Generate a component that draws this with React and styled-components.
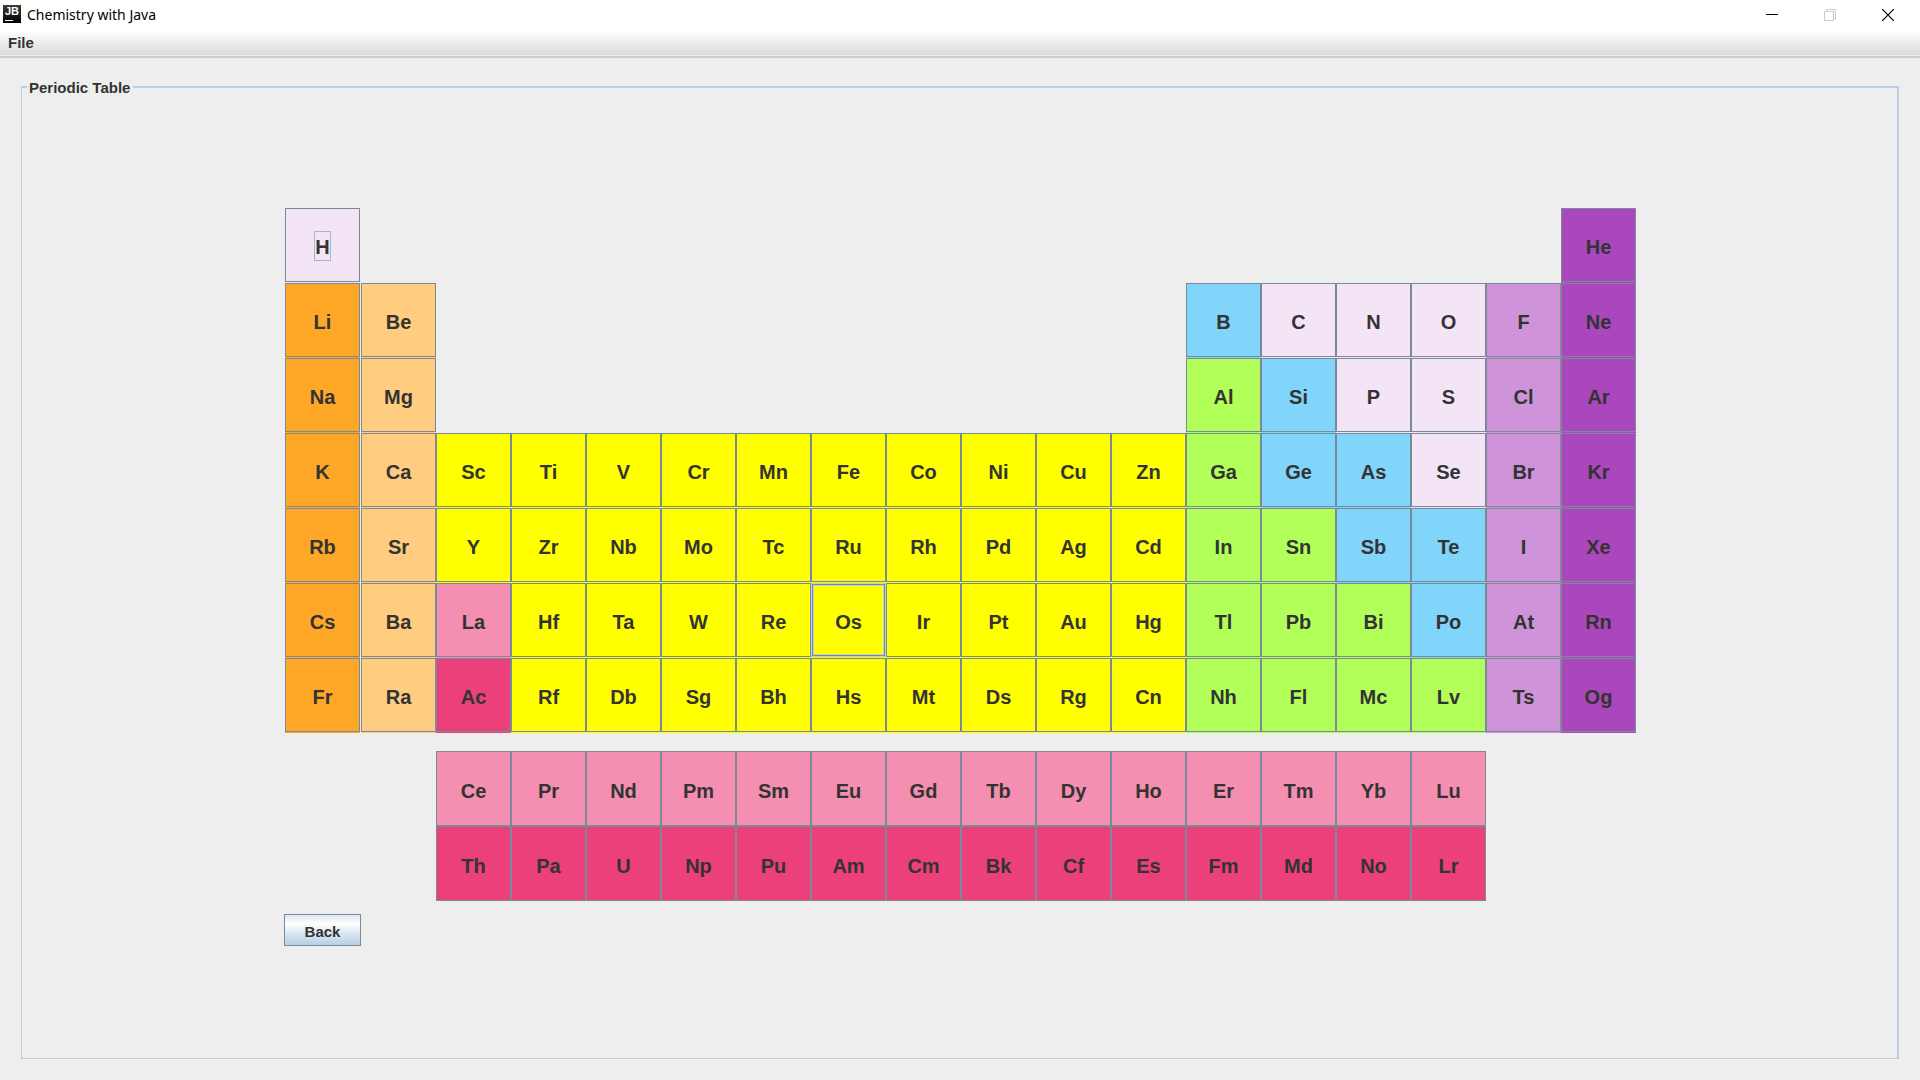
import React from "react";
import styled, { createGlobalStyle } from "styled-components";

const GlobalStyle = createGlobalStyle`
  * { box-sizing: border-box; }
  body { margin: 0; background: #eeeeee; }
  button { font: inherit; color: inherit; margin: 0; padding: 0; }
`;

const Window = styled.div`
  display: flex;
  flex-direction: column;
  min-height: 100vh;
  background: #eeeeee;
  color: #333333;
  font: bold 15px/18px "Liberation Sans", Arial, sans-serif;
`;

const TitleBar = styled.header`
  display: flex;
  align-items: center;
  height: 30px;
  padding: 0 3px;
  background: #ffffff;
`;

const AppIcon = styled.span`
  display: flex;
  flex-direction: column;
  width: 18px;
  height: 18px;
  margin-bottom: 2px;
  padding: 1px 2px;
  background: linear-gradient(#3c3c3c, #000000);
  color: #ffffff;
  font-size: 11px;
  line-height: 11px;
  &::after {
    content: "";
    width: 8px;
    height: 1px;
    margin-top: 3px;
    background: #ffffff;
  }
`;

const Title = styled.h1`
  flex: 1;
  margin: 0 0 0 6px;
  color: #000000;
  font: 14px/20px "Noto Sans", "Segoe UI", sans-serif;
`;

const WindowButton = styled.button`
  display: flex;
  align-items: center;
  justify-content: center;
  width: 58px;
  height: 28px;
  border: 0;
  background: transparent;
  color: ${(p) => (p.disabled ? "#cccccc" : "#000000")};
`;

const MenuBar = styled.nav`
  display: flex;
  align-items: center;
  height: 28px;
  padding-left: 8px;
  padding-bottom: 1px;
  border-bottom: 2px solid #cccccc;
  background: linear-gradient(#ffffff, #dadada 25px, #eeeeee 25px);
`;

const MenuButton = styled.button`
  border: 0;
  background: transparent;
`;

const Main = styled.main`
  flex: 1;
  display: flex;
  padding: 19px 21px 21px;
`;

const Panel = styled.fieldset`
  flex: 1;
  display: flex;
  align-items: center;
  justify-content: center;
  min-width: 0;
  margin: 0;
  padding: 0 3px 2px 5px;
  border: solid #b8cfe5;
  border-width: 2px 2px 1px 1px;
`;

const PanelTitle = styled.legend`
  padding: 2px 3px 0 2px;
`;

const Content = styled.div`
  display: flex;
  flex-direction: column;
  align-items: flex-start;
`;

const Table = styled.div`
  display: grid;
  grid-template-columns: 76px repeat(17, 75px);
  grid-template-rows: repeat(7, 75px) 18px repeat(2, 75px);
  margin: 0 1px 13px;
`;

const fills = {
  nonmetal: "#f3e5f5",
  alkali: "#ffa726",
  alkaline: "#ffcc80",
  transition: "#ffff00",
  metal: "#b2ff59",
  metalloid: "#81d4fa",
  halogen: "#ce93d8",
  noble: "#ab47bc",
  lanthanide: "#f48fb1",
  actinide: "#ec407a",
};

const Element = styled.button`
  grid-column: ${(p) => p.$column};
  grid-row: ${(p) => p.$row};
  display: flex;
  width: 75px;
  height: 75px;
  border: 0;
  background: ${(p) => fills[p.$kind]};
  font-size: 20px;
  line-height: 26px;
`;

const Face = styled.span`
  flex: 1;
  align-self: stretch;
  display: flex;
  align-items: center;
  justify-content: center;
  margin-bottom: ${(p) => (p.$series ? 0 : 1)}px;
  padding-top: ${(p) => (p.$series ? 3 : 2)}px;
  border: 1px solid #7a8a99;
  ${(p) =>
    p.$hovered &&
    `
    border-color: #b8cfe5;
    box-shadow: inset 0 0 0 1px #7a8a99, inset 0 0 0 2px #b8cfe5;
  `}
`;

const Symbol = styled.span`
  padding-top: 2px;
  outline: ${(p) => (p.$focused ? "1px solid #a3b8cc" : "none")};
`;

const BackButton = styled.button`
  width: 77px;
  height: 32px;
  padding-top: 4px;
  border: 1px solid #7a8a99;
  background: linear-gradient(#dde8f3, #ffffff 30%, #dde8f3 60%, #b8cfe5);
`;

const n = "nonmetal", a = "alkali", e = "alkaline", t = "transition", m = "metal",
  d = "metalloid", h = "halogen", g = "noble", l = "lanthanide", c = "actinide";

const runs = [
  [1, 1, [["H", n]]],
  [1, 18, [["He", g]]],
  [2, 1, [["Li", a], ["Be", e]]],
  [2, 13, [["B", d], ["C", n], ["N", n], ["O", n], ["F", h], ["Ne", g]]],
  [3, 1, [["Na", a], ["Mg", e]]],
  [3, 13, [["Al", m], ["Si", d], ["P", n], ["S", n], ["Cl", h], ["Ar", g]]],
  [4, 1, [["K", a], ["Ca", e], ["Sc", t], ["Ti", t], ["V", t], ["Cr", t], ["Mn", t], ["Fe", t], ["Co", t], ["Ni", t], ["Cu", t], ["Zn", t], ["Ga", m], ["Ge", d], ["As", d], ["Se", n], ["Br", h], ["Kr", g]]],
  [5, 1, [["Rb", a], ["Sr", e], ["Y", t], ["Zr", t], ["Nb", t], ["Mo", t], ["Tc", t], ["Ru", t], ["Rh", t], ["Pd", t], ["Ag", t], ["Cd", t], ["In", m], ["Sn", m], ["Sb", d], ["Te", d], ["I", h], ["Xe", g]]],
  [6, 1, [["Cs", a], ["Ba", e], ["La", l], ["Hf", t], ["Ta", t], ["W", t], ["Re", t], ["Os", t], ["Ir", t], ["Pt", t], ["Au", t], ["Hg", t], ["Tl", m], ["Pb", m], ["Bi", m], ["Po", d], ["At", h], ["Rn", g]]],
  [7, 1, [["Fr", a], ["Ra", e], ["Ac", c], ["Rf", t], ["Db", t], ["Sg", t], ["Bh", t], ["Hs", t], ["Mt", t], ["Ds", t], ["Rg", t], ["Cn", t], ["Nh", m], ["Fl", m], ["Mc", m], ["Lv", m], ["Ts", h], ["Og", g]]],
  [9, 3, ["Ce", "Pr", "Nd", "Pm", "Sm", "Eu", "Gd", "Tb", "Dy", "Ho", "Er", "Tm", "Yb", "Lu"].map((s) => [s, l])],
  [10, 3, ["Th", "Pa", "U", "Np", "Pu", "Am", "Cm", "Bk", "Cf", "Es", "Fm", "Md", "No", "Lr"].map((s) => [s, c])],
];

export default function App() {
  return (
    <Window>
      <GlobalStyle />
      <TitleBar>
        <AppIcon>JB</AppIcon>
        <Title>Chemistry with Java</Title>
        <WindowButton aria-label="Minimize">
          <svg width="12" height="12" shapeRendering="crispEdges"><path d="M0 5.5h12" stroke="currentColor" /></svg>
        </WindowButton>
        <WindowButton aria-label="Restore" disabled>
          <svg width="12" height="12" fill="none" stroke="currentColor" shapeRendering="crispEdges">
            <path d="M.5 2.5h9v9h-9zM2.5 2.5v-2h9v9h-2" />
          </svg>
        </WindowButton>
        <WindowButton aria-label="Close">
          <svg width="12" height="12"><path d="M0 0l12 12M12 0L0 12" stroke="currentColor" strokeWidth="1.2" /></svg>
        </WindowButton>
      </TitleBar>
      <MenuBar>
        <MenuButton>File</MenuButton>
      </MenuBar>
      <Main>
        <Panel>
          <PanelTitle>Periodic Table</PanelTitle>
          <Content>
            <Table>
              {runs.map(([row, start, items]) =>
                items.map(([symbol, kind], i) => (
                  <Element key={symbol} $row={row} $column={start + i} $kind={kind}>
                    <Face $series={row > 7} $hovered={symbol === "Os"}>
                      <Symbol $focused={symbol === "H"}>{symbol}</Symbol>
                    </Face>
                  </Element>
                ))
              )}
            </Table>
            <BackButton>Back</BackButton>
          </Content>
        </Panel>
      </Main>
    </Window>
  );
}
